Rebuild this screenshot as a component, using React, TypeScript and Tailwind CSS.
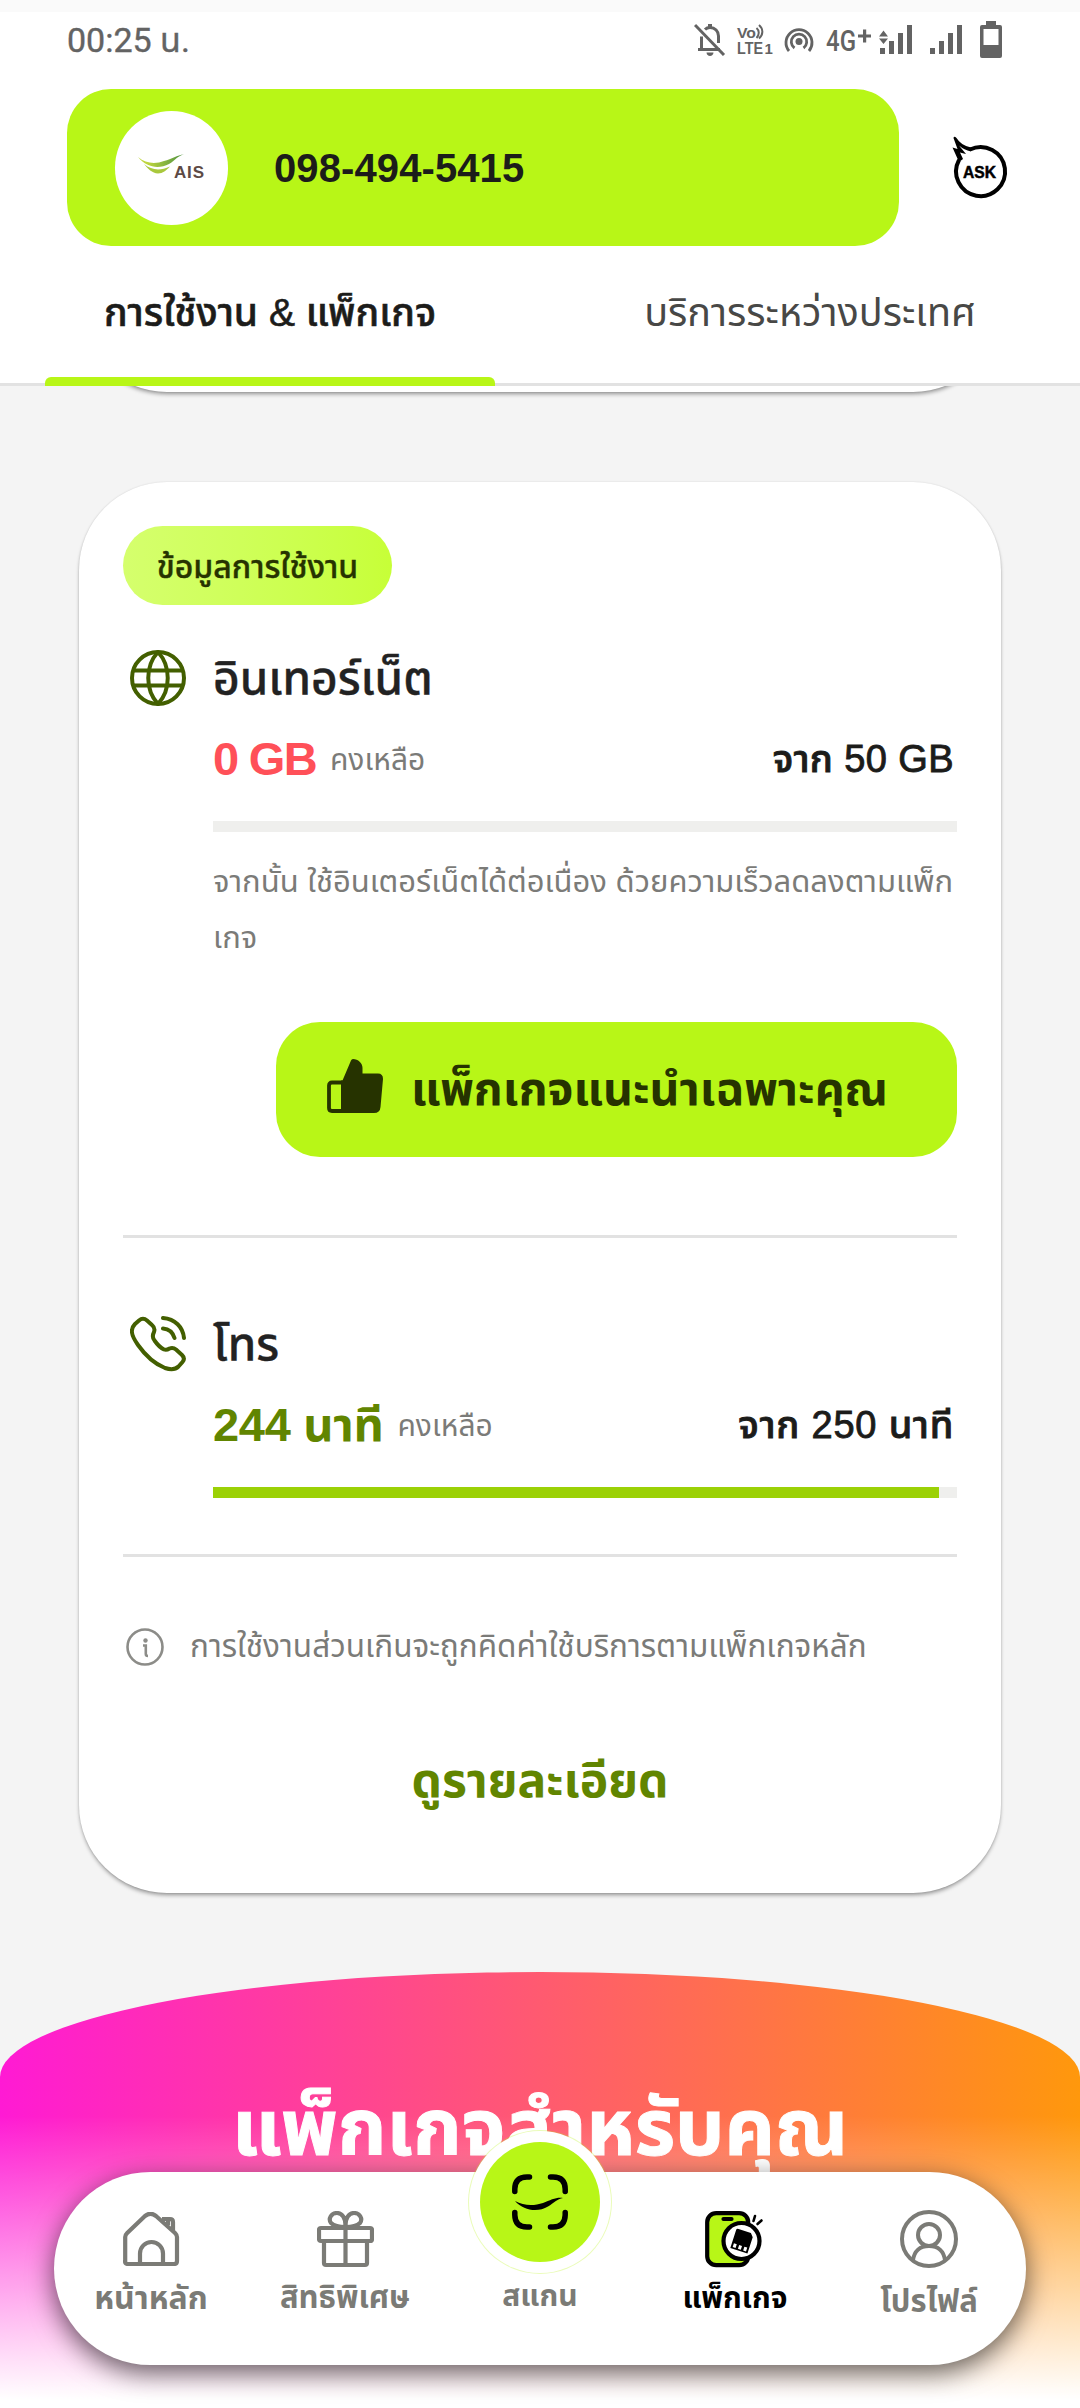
import type { ReactNode } from "react";

function BellOffIcon() {
  return (
    <svg width="32" height="33" viewBox="0 0 32 33" fill="none" stroke="#636363" strokeWidth="3">
      <path d="M4 26.500h22M7.500 26V13.500M11 6.500C12.500 5 14 4.500 16 4.500c5 0 8.500 4 8.500 8.500v7" />
      <path d="M16 1v4" strokeWidth="4" />
      <path d="M1 2l29 30" />
      <path d="M12.500 29.500h7c0 4.500-7 4.500-7 0z" fill="#636363" stroke="none" />
    </svg>
  );
}

function VolteIcon() {
  return (
    <svg className="overflow-visible" width="36" height="31" viewBox="0 0 36 31" fill="#636363">
      <text x="0" y="14" fontSize="15" fontWeight="bold" fontFamily="Liberation Sans" textLength="19" lengthAdjust="spacingAndGlyphs">Vo</text>
      <path d="M19.500 4c3 2.500 3 7 0 10M22 1c4.500 4 4.500 9.500 0 13.500" fill="none" stroke="#636363" strokeWidth="2" />
      <text x="0" y="30" fontSize="16.5" fontWeight="bold" fontFamily="Liberation Sans" textLength="26" lengthAdjust="spacingAndGlyphs">LTE</text>
      <text x="27.5" y="30" fontSize="15" fontWeight="bold" fontFamily="Liberation Sans">1</text>
    </svg>
  );
}

function HotspotIcon() {
  return (
    <svg width="30" height="27" viewBox="0 0 30 27" fill="none" stroke="#636363" strokeWidth="2.800">
      <circle cx="15" cy="15.500" r="3.500" fill="#636363" stroke="none" />
      <path d="M10.500 22a7.700 7.700 0 1 1 9 0" />
      <path d="M5 25a13 13 0 1 1 20 0" />
    </svg>
  );
}

function NetworkLabel() {
  return (
    <svg className="overflow-visible" width="46" height="26" viewBox="0 0 46 26" fill="#636363">
      <text x="0" y="24" fontSize="30" fontFamily="Roboto" fontWeight="500" textLength="30" lengthAdjust="spacingAndGlyphs">4G</text>
      <path d="M37 2.500h3.200v5h4.800v3h-4.800v5H37v-5h-5v-3h5z" />
    </svg>
  );
}

function SignalIcon({ data }: { data?: boolean }) {
  return (
    <svg width="34" height="30" viewBox="0 0 34 30" fill="#636363">
      <path d="M1 23h5v6H1zM10 16h5v13h-5zM19 8h5v21h-5zM28 0h5v29h-5z" />
      {data && <path d="M0 11.500L4.500 5.500 9 11.500zM0 13.500L4.500 19 9 13.500z" />}
    </svg>
  );
}

function BatteryIcon() {
  return (
    <svg width="22" height="37" viewBox="0 0 22 37">
      <path d="M6 0h10v4h4a2 2 0 0 1 2 2v29a2 2 0 0 1-2 2H2a2 2 0 0 1-2-2V6a2 2 0 0 1 2-2h4z" fill="#636363" />
      <path d="M3.500 8h15v16h-15z" fill="#fff" />
    </svg>
  );
}

function AisLogo() {
  return (
    <svg className="overflow-visible" width="68" height="28" viewBox="0 0 68 28">
      <defs>
        <linearGradient id="leaf" x1="0" x2="1">
          <stop offset="0.2" stopColor="#bfd63e" />
          <stop offset="1" stopColor="#4d9140" />
        </linearGradient>
      </defs>
      <path d="M0 3c8 7 18 7 26 4 8-2 13-6 20-6.500-6 1-9 6-15 9.500-10 5-22 4-31-7z" fill="url(#leaf)" />
      <path d="M6 10c8 6.500 16 7 26 2.500-4 4-7 7-12 7-6-.500-10-4.500-14-9.500z" fill="#a9c83d" />
      <text x="36" y="24" fontSize="17" fontWeight="bold" fontFamily="Liberation Sans" fill="#5d4a45" textLength="30">AIS</text>
    </svg>
  );
}

function AskIcon() {
  return (
    <svg className="overflow-visible" width="56" height="64" viewBox="0 0 56 64" fill="none" stroke="#000" strokeWidth="4">
      <path d="M7 24A24.500 24.500 0 1 0 18 13.500" />
      <path d="M.500 11.500L5.500 13 1.500 2Q2 -.5 4.500 2 9 9.500 19 11.500v4Q12 14 7 9.500l7 8.500-6-1.500 3 6.500-4 3z" fill="#000" stroke="none" />
      <text x="11" y="42" fontSize="17" fontWeight="bold" fontFamily="Liberation Sans" fill="#000" strokeWidth="0.5" textLength="33" lengthAdjust="spacingAndGlyphs">ASK</text>
    </svg>
  );
}

function GlobeIcon() {
  return (
    <svg width="56" height="56" viewBox="0 0 56 56" fill="none" stroke="#435f00" strokeWidth="4">
      <circle cx="28" cy="28" r="26" />
      <path d="M28 2C15 16 15 40 28 54 41 40 41 16 28 2zM4 20.500h48M4 35.500h48" />
    </svg>
  );
}

function CallIcon() {
  return (
    <svg width="56" height="56" viewBox="0 0 56 56" fill="none" stroke="#435f00" strokeWidth="4" strokeLinecap="round" strokeLinejoin="round">
      <path d="M5 8L9 4.500q4-3.500 8 0L22 9q3.500 3 2 7-2.500 5 .500 8.500 4.500 6.500 9.500 9 2.500 1 5.500-1 3.500-1.500 6.500 1l6 5.500q3.500 3.500.500 7L48.500 50.500Q44 55 35 52 20 46 8 29 1 19 2 14q.500-3.500 3-6z" />
      <path d="M33 2c12 1 20 9 21 20M33 12.500c6 .500 10 4.500 11.500 9.500" />
    </svg>
  );
}

function ThumbIcon() {
  return (
    <svg width="56" height="54" viewBox="0 0 56 54" fill="#263300">
      <path d="M15.500 21.500L24 1.500q.500-1.500 2-1.500c5 0 9.500 4 9.500 9v5.500H51q5 0 5 5.500l-2.500 28q-.500 6-6.500 6H14V21.500z" />
      <path d="M16 23.500H5q-3 0-3 3V49q0 3 3 3h11" fill="none" stroke="#263300" strokeWidth="3.800" />
    </svg>
  );
}

function InfoIcon() {
  return (
    <svg width="38" height="38" viewBox="0 0 38 38" fill="none" stroke="#8c8c88" strokeWidth="2.600">
      <circle cx="19" cy="19" r="17.500" />
      <circle cx="19.500" cy="12.500" r="2.200" fill="#8c8c88" stroke="none" />
      <path d="M17 17.500h2.800V26q0 2 2.200 2" />
    </svg>
  );
}

function HomeIcon() {
  return (
    <svg width="57" height="54" viewBox="0 0 57 54" fill="none" stroke="#7b7b76" strokeWidth="4.200" strokeLinejoin="round">
      <path d="M2.200 49V25q0-2 2-4L22 4q5.500-4.500 11 0l19 17q2 2 2 4v24q0 3-3 3H5q-3 0-3-3z" />
      <path d="M17 52V41.500a11.500 11.500 0 0 1 23 0V52M39 7h8q3 0 3 3v9M45 9v4" />
    </svg>
  );
}

function GiftIcon() {
  return (
    <svg width="57" height="57" viewBox="0 0 57 57" fill="none" stroke="#7b7b76" strokeWidth="4.200" strokeLinejoin="round">
      <path d="M4 17h49q2 0 2 2v9q0 2-2 2H4q-2 0-2-2v-9q0-2 2-2zM7 30v22q0 2 2 2h39q2 0 2-2V30M28.500 17v37" />
      <path d="M28.500 16C29 7 25 2 20 2c-6 0-9 6-6 10 3 3 9 4 14.500 4zM28.500 16C28 7 32 2 37 2c6 0 9 6 6 10-3 3-9 4-14.500 4z" />
    </svg>
  );
}

function PackageIcon() {
  return (
    <svg width="60" height="57" viewBox="0 0 60 57" fill="none" stroke="#000" strokeWidth="4.200" strokeLinecap="round">
      <rect x="2.200" y="2.200" width="41" height="52" rx="9" fill="#b8f617" />
      <path d="M18.500 8h8" />
      <circle cx="36.500" cy="30" r="18" fill="#fff" />
      <path d="M50 5l-1.500 5M56.500 9.500l-4 3.500" strokeWidth="2.600" />
      <g transform="rotate(18 36.5 30)" stroke="none">
        <path d="M30 19.500h13l3 3.500v17H28V21q0-1.500 2-1.500z" fill="#000" />
        <path d="M30 34.500h3v4h-3zM35.500 34.500h3v4h-3zM41 34.500h3v4h-3z" fill="#fff" />
      </g>
    </svg>
  );
}

function ProfileIcon() {
  return (
    <svg width="58" height="58" viewBox="0 0 58 58" fill="none" stroke="#7b7b76" strokeWidth="4">
      <circle cx="29" cy="29" r="27" />
      <circle cx="29" cy="25" r="11" />
      <path d="M13 50.500C14 41 20 36 29 36s15 5 16 14.500" />
    </svg>
  );
}

function ScanIcon() {
  return (
    <svg width="56" height="56" viewBox="0 0 56 56" fill="none" stroke="#000" strokeWidth="5.500" strokeLinecap="round">
      <path d="M2.800 17.500V15Q3 3 15 3h2.500M38.500 3H41q12 0 12.200 12v2.500M53.200 38.500V41Q53 53 41 53h-2.500M17.500 53H15Q3 53 2.800 41v-2.500" />
      <path d="M3 27c9 5 19 5 28 2 8-3 13-6 20-5-6 1-9 5-15 8.500C26 38.500 12 37 3 27z" fill="#000" stroke="none" />
    </svg>
  );
}

function NavItem({ icon, label, className }: { icon: ReactNode; label: string; className: string }) {
  return (
    <div className="flex w-[194px] flex-col items-center">
      <div className="flex h-[58px] items-center">{icon}</div>
      <span className={`whitespace-nowrap font-bold leading-[48px] ${className}`}>{label}</span>
    </div>
  );
}

function Remaining({ value, total, valueClass, totalClass }: { value: string; total: string; valueClass: string; totalClass: string }) {
  return (
    <div className="flex h-[60px] items-baseline whitespace-nowrap pl-[90px] pr-[3px] leading-[60px]">
      <span className={`text-[47px] font-bold ${valueClass}`}>{value}</span>
      <span className="relative -top-[5px] ml-[14px] text-[30px] text-[#7b7b78]">คงเหลือ</span>
      <span className={`relative -top-[3px] ml-auto text-[38px] font-medium text-[#1c1c1a] [-webkit-text-stroke:0.9px] ${totalClass}`}>{total}</span>
    </div>
  );
}

export default function App() {
  return (
    <div className="relative h-[2408px] w-[1080px] overflow-hidden bg-[#f4f4f4] font-['Liberation_Sans','Noto_Sans_Thai',sans-serif]">
      <header className="h-[386px] border-b-[3px] border-[#e2e2e2] bg-white">
        <div className="h-3 bg-[#fafafa]" />
        <div className="flex h-[77px] items-start pl-[67px] pr-[78px] text-[#636363]">
          <span className="pt-[7px] font-['Roboto','Noto_Sans_Thai',sans-serif] text-[34px] leading-[42px] [-webkit-text-stroke:0.4px]">00:25 น.</span>
          <div className="ml-auto flex h-[55px] items-center">
            <BellOffIcon />
            <div className="ml-[11px]"><VolteIcon /></div>
            <div className="ml-[11px]"><HotspotIcon /></div>
            <div className="ml-3"><NetworkLabel /></div>
            <div className="ml-[7px]"><SignalIcon data /></div>
            <div className="ml-[16px]"><SignalIcon /></div>
            <div className="ml-[17px]"><BatteryIcon /></div>
          </div>
        </div>
        <div className="flex items-center pl-[67px]">
          <div className="flex h-[157px] w-[832px] items-center rounded-[44px] bg-[#b8f617] pl-12">
            <div className="flex h-[114px] w-[113px] items-center justify-center rounded-full bg-white">
              <AisLogo />
            </div>
            <span className="ml-[46px] text-[40px] font-bold tracking-[0.1px] text-[#1c1c1a]">098-494-5415</span>
          </div>
          <div className="ml-[53px]"><AskIcon /></div>
        </div>
        <div className="flex h-[140px] items-end px-[45px]">
          <div className="flex h-full w-[450px] flex-col items-center">
            <span className="flex h-[131px] items-center whitespace-nowrap pt-[3px] text-[39px] font-medium text-[#1c1c1a] [-webkit-text-stroke:0.6px]">การใช้งาน &amp; แพ็กเกจ</span>
            <div className="h-[9px] w-full rounded-t-[6px] bg-[#b8f617]" />
          </div>
          <div className="ml-[90px] flex h-full w-[450px] flex-col items-center">
            <span className="flex h-[131px] items-center whitespace-nowrap pt-[3px] text-[39.500px] text-[#484846]">บริการระหว่างประเทศ</span>
          </div>
        </div>
      </header>

      <div className="h-[96px] overflow-hidden">
        <div className="mx-[79px] -mt-[194px] h-[200px] rounded-[88px] bg-white shadow-[0_3px_4px_-1px_rgba(0,0,0,0.4),0_0_2px_rgba(0,0,0,0.12)]" />
      </div>

      <main className="mx-[79px] h-[1411px] rounded-[88px] bg-white px-11 pt-[44px] shadow-[0_3px_4px_-1px_rgba(0,0,0,0.4),0_0_2px_rgba(0,0,0,0.12)]">
        <div className="flex h-[79px] w-[269px] items-center justify-center whitespace-nowrap rounded-full bg-linear-to-r from-[#d5ff6d] to-[#c7ff37] pt-[2px] text-[32px] font-medium text-[#263300] [-webkit-text-stroke:0.4px]">
          ข้อมูลการใช้งาน
        </div>
        <div className="mt-11 flex h-[58px] items-center pl-[7px]">
          <GlobeIcon />
          <span className="ml-[27px] whitespace-nowrap text-[46px] font-medium text-[#222] [-webkit-text-stroke:0.4px]">อินเทอร์เน็ต</span>
        </div>
        <div className="mt-[22px]">
          <Remaining value="0 GB" total="จาก 50 GB" valueClass="tracking-[-1.700px] text-[#ff5058]" totalClass="tracking-[0.400px]" />
        </div>
        <div className="ml-[90px] mt-[32px] h-[11px] bg-[#efefed]" />
        <p className="ml-[90px] mt-[22px] whitespace-nowrap text-[31px] leading-[56px] text-[#7b7b78]">
          จากนั้น ใช้อินเตอร์เน็ตได้ต่อเนื่อง ด้วยความเร็วลดลงตามแพ็ก
          <br />
          เกจ
        </p>
        <div className="ml-[153px] mt-[56px] flex h-[135px] items-center rounded-[44px] bg-[#b8f617] pl-[51px]">
          <div className="-mt-[8px]"><ThumbIcon /></div>
          <span className="ml-[28px] whitespace-nowrap text-[46.400px] font-bold text-[#263300]">แพ็กเกจแนะนำเฉพาะคุณ</span>
        </div>
        <div className="mt-[78px] h-[3px] bg-[#e2e2e2]" />
        <div className="mt-[77px] flex h-[58px] items-center pl-[7px]">
          <CallIcon />
          <span className="ml-[27px] whitespace-nowrap text-[46px] font-medium text-[#222] [-webkit-text-stroke:0.4px]">โทร</span>
        </div>
        <div className="mt-[22px]">
          <Remaining value="244 นาที" total="จาก 250 นาที" valueClass="tracking-[-0.300px] text-[#618500]" totalClass="tracking-[0.800px]" />
        </div>
        <div className="ml-[90px] mt-[32px] h-[11px] bg-[#efefed]">
          <div className="h-full w-[726px] bg-[#9bd106]" />
        </div>
        <div className="mt-[56px] h-[3px] bg-[#e2e2e2]" />
        <div className="mt-[60px] flex h-[60px] items-center pl-[3px]">
          <InfoIcon />
          <span className="ml-[26px] whitespace-nowrap text-[31.500px] text-[#7b7b78]">การใช้งานส่วนเกินจะถูกคิดค่าใช้บริการตามแพ็กเกจหลัก</span>
        </div>
        <div className="mt-[64px] flex h-[80px] items-center justify-center whitespace-nowrap text-[48px] font-bold text-[#618500]">
          ดูรายละเอียด
        </div>
      </main>

      <section className="mt-[79px] h-[436px] rounded-t-[50%_105px] bg-[linear-gradient(90deg,#ff1ad4,#ff5a70_50%,#ff980c)]">
        <div className="flex h-full justify-center bg-[linear-gradient(180deg,rgba(255,255,255,0)_33%,#fff_98%)] pt-[106px]">
          <h2 className="h-[100px] whitespace-nowrap text-[78px] font-bold leading-[100px] text-white [-webkit-text-stroke:1px]">แพ็กเกจสำหรับคุณ</h2>
        </div>
      </section>

      <nav className="absolute left-[54px] top-[2172px] flex h-[193px] w-[972px] rounded-full bg-white pt-[38px] shadow-[0_8px_26px_rgba(0,0,0,0.6)]">
        <NavItem icon={<HomeIcon />} label="หน้าหลัก" className="pt-[6px] text-[32px] text-[#7b7b76]" />
        <NavItem icon={<GiftIcon />} label="สิทธิพิเศษ" className="pt-[6px] text-[31px] text-[#7b7b76]" />
        <div className="flex w-[196px] flex-col items-center">
          <div className="-mt-[79px] flex h-[142px] w-[142px] items-center justify-center rounded-full bg-white ring-1 ring-[#b8f617]/30">
            <div className="flex h-[120px] w-[120px] items-center justify-center rounded-full bg-[#b8f617]">
              <ScanIcon />
            </div>
          </div>
          <span className="whitespace-nowrap text-[30px] font-bold text-[#7b7b76]">สแกน</span>
        </div>
        <NavItem icon={<PackageIcon />} label="แพ็กเกจ" className="pt-[6px] text-[30px] text-black" />
        <NavItem icon={<ProfileIcon />} label="โปรไฟล์" className="pt-[10px] text-[31px] text-[#7b7b76]" />
      </nav>
    </div>
  );
}
